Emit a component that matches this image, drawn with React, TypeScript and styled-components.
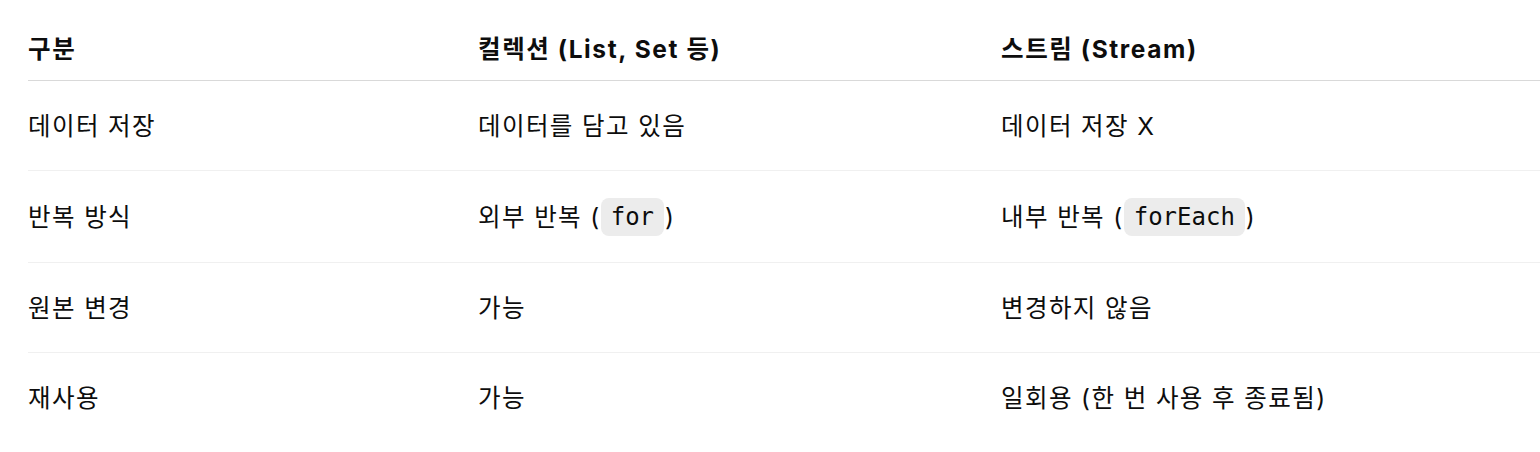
import React from "react";
import styled, { createGlobalStyle } from "styled-components";

const Global = createGlobalStyle`
  html, body { margin: 0; padding: 0; background: #ffffff; }
  body {
    font-family: "Inter", "Noto Sans CJK KR", sans-serif;
    color: #0d0d0d;
    -webkit-font-smoothing: antialiased;
  }
`;

const Wrap = styled.div`
  padding: 19px 0 0 28px;
`;

const Table = styled.div`
  display: grid;
  grid-template-columns: 450px 523px 1fr;
`;

const HeadCell = styled.div`
  font-size: 24.5px;
  line-height: 36px;
  font-weight: 700;
  letter-spacing: 1.6px;
  padding: 12px 0 13px;
  border-bottom: 1.5px solid #d9d9d9;
  white-space: nowrap;
`;

const Cell = styled.div<{ $last?: boolean }>`
  font-size: 24.5px;
  line-height: 36px;
  font-weight: 400;
  letter-spacing: 1.4px;
  padding: 27px 0 26px;
  border-bottom: ${(p) => (p.$last ? "1px solid transparent" : "1.5px solid #f0f0f0")};
  white-space: nowrap;
  display: flex;
  align-items: center;
`;

const Code = styled.code`
  font-family: "DejaVu Sans Mono", monospace;
  font-size: 24px;
  letter-spacing: 0;
  line-height: 38px;
  height: 38px;
  display: inline-block;
  background: #ececec;
  border-radius: 8px;
  padding: 0 10px;
  margin: 0 1px 0 0;
`;

const rows: React.ReactNode[][] = [
  ["데이터 저장", "데이터를 담고 있음", "데이터 저장 X"],
  [
    "반복 방식",
    <>외부 반복 (<Code>for</Code>)</>,
    <>내부 반복 (<Code>forEach</Code>)</>,
  ],
  ["원본 변경", "가능", "변경하지 않음"],
  ["재사용", "가능", "일회용 (한 번 사용 후 종료됨)"],
];

export default function App() {
  return (
    <>
      <Global />
      <Wrap>
        <Table>
          <HeadCell>구분</HeadCell>
          <HeadCell>컬렉션 (List, Set 등)</HeadCell>
          <HeadCell>스트림 (Stream)</HeadCell>
          {rows.map((r, i) =>
            r.map((c, j) => (
              <Cell key={`${i}-${j}`} $last={i === rows.length - 1}>
                {c}
              </Cell>
            ))
          )}
        </Table>
      </Wrap>
    </>
  );
}
